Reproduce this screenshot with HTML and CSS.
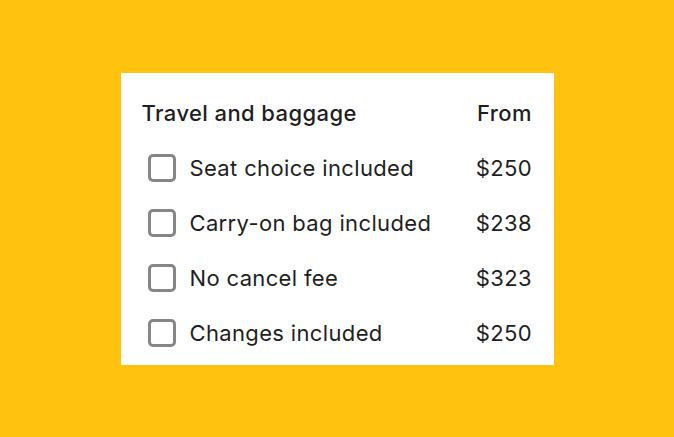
FILE: index.html
```html
<!DOCTYPE html>
<html>
<head>
<meta charset="utf-8">
<link rel="stylesheet" href="styles.css">
</head>
<body>
<div class="card">
  <div class="row header">
    <span class="label">Travel and baggage</span>
    <span class="price">From</span>
  </div>
  <div class="row item">
    <span class="box"></span>
    <span class="label">Seat choice included</span>
    <span class="price">$250</span>
  </div>
  <div class="row item">
    <span class="box"></span>
    <span class="label">Carry-on bag included</span>
    <span class="price">$238</span>
  </div>
  <div class="row item">
    <span class="box"></span>
    <span class="label">No cancel fee</span>
    <span class="price">$323</span>
  </div>
  <div class="row item">
    <span class="box"></span>
    <span class="label">Changes included</span>
    <span class="price">$250</span>
  </div>
</div>
</body>
</html>
```
FILE: styles.css
```css
html, body {
  margin: 0;
  height: 100%;
}
body {
  background: #fec20f;
  display: flex;
  align-items: center;
  justify-content: center;
  font-family: Inter, "Noto Sans", sans-serif;
  color: #1f1f1f;
}
.card {
  background: #fff;
  width: 433px;
  height: 292px;
  box-sizing: border-box;
  padding: 13px 22px 4px 21px;
  display: flex;
  flex-direction: column;
}
.row {
  height: 55px;
  display: flex;
  align-items: center;
  font-size: 22px;
  letter-spacing: 0.35px;
}
.header {
  font-weight: 500;
  letter-spacing: 0.4px;
}
.item {
  padding-left: 6px;
}
.label {
  flex: 1;
}
.box {
  width: 28px;
  height: 28px;
  box-sizing: border-box;
  border: 3px solid #868686;
  border-radius: 5px;
  margin-right: 14px;
}
.price {
  text-align: right;
  margin-right: -0.4px;
}
```
